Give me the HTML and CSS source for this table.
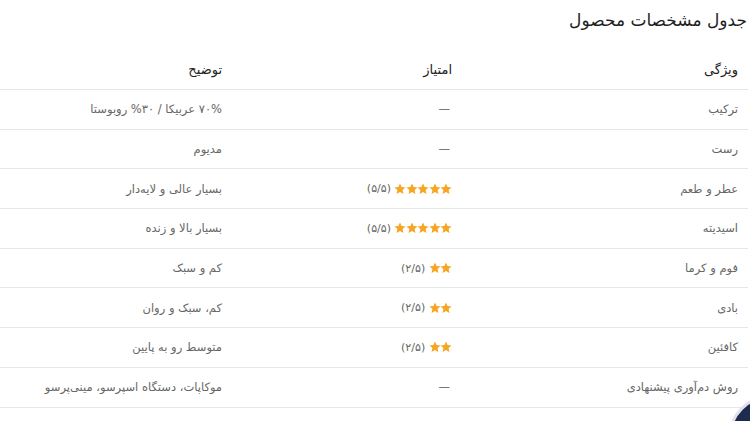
FILE: index.html
```html
<!DOCTYPE html>
<html lang="fa" dir="rtl">
<head>
<meta charset="utf-8">
<link rel="stylesheet" href="styles.css">
</head>
<body>
<svg width="0" height="0" class="defs" aria-hidden="true">
  <defs>
    <symbol id="st" viewBox="0 0 24 24"><polygon points="12,1 15.2,8.1 23,9 17.2,14.2 18.8,22 12,18 5.2,22 6.8,14.2 1,9 8.8,8.1"/></symbol>
  </defs>
</svg>
<div class="page">
  <h2 class="title">جدول مشخصات محصول</h2>
  <table class="spec">
    <colgroup>
      <col class="c1"><col class="c2"><col class="c3">
    </colgroup>
    <thead>
      <tr><th>ویژگی</th><th>امتیاز</th><th>توضیح</th></tr>
    </thead>
    <tbody>
      <tr><td>ترکیب</td><td><span class="dash">—</span></td><td>۷۰% عربیکا / ۳۰% روبوستا</td></tr>
      <tr><td>رست</td><td><span class="dash">—</span></td><td>مدیوم</td></tr>
      <tr><td>عطر و طعم</td><td><div class="rate"><span class="stars"><svg><use href="#st"/></svg><svg><use href="#st"/></svg><svg><use href="#st"/></svg><svg><use href="#st"/></svg><svg><use href="#st"/></svg></span><span class="score">(۵/۵)</span></div></td><td>بسیار عالی و لایه‌دار</td></tr>
      <tr><td>اسیدیته</td><td><div class="rate"><span class="stars"><svg><use href="#st"/></svg><svg><use href="#st"/></svg><svg><use href="#st"/></svg><svg><use href="#st"/></svg><svg><use href="#st"/></svg></span><span class="score">(۵/۵)</span></div></td><td>بسیار بالا و زنده</td></tr>
      <tr><td>فوم و کرما</td><td><div class="rate"><span class="stars"><svg><use href="#st"/></svg><svg><use href="#st"/></svg></span><span class="score">(۲/۵)</span></div></td><td>کم و سبک</td></tr>
      <tr><td>بادی</td><td><div class="rate"><span class="stars"><svg><use href="#st"/></svg><svg><use href="#st"/></svg></span><span class="score">(۲/۵)</span></div></td><td>کم، سبک و روان</td></tr>
      <tr><td>کافئین</td><td><div class="rate"><span class="stars"><svg><use href="#st"/></svg><svg><use href="#st"/></svg></span><span class="score">(۲/۵)</span></div></td><td>متوسط رو به پایین</td></tr>
      <tr><td>روش دم‌آوری پیشنهادی</td><td><span class="dash">—</span></td><td>موکاپات، دستگاه اسپرسو، مینی‌پرسو</td></tr>
    </tbody>
  </table>
</div>
<div class="fab"></div>
</body>
</html>
```
FILE: styles.css
```css
html, body {
  margin: 0;
  padding: 0;
  background: #ffffff;
  overflow: hidden;
}
body {
  font-family: "DejaVu Sans", "Noto Sans", sans-serif;
  color: #222;
}
.defs {
  position: absolute;
  width: 0;
  height: 0;
}
.page {
  margin-right: 2px;
}
.title {
  margin: 0;
  height: 50px;
  padding-right: 1px;
  font-size: 17px;
  font-weight: normal;
  line-height: 40px;
  color: #1e1e1e;
}
.spec {
  width: 770px;
  border-collapse: collapse;
  table-layout: fixed;
}
.c1 { width: 286px; }
.c2 { width: 230px; }
.c3 { width: 254px; }
.spec th {
  text-align: right;
  font-weight: normal;
  font-size: 13px;
  color: #222;
  height: 39px;
  padding: 0 10px 0 0;
  border-bottom: 1px solid #e6e6e6;
}
.spec td {
  text-align: right;
  font-size: 11.5px;
  color: #666;
  height: 38.7px;
  padding: 0 10px 0 0;
  border-bottom: 1px solid #e6e6e6;
  white-space: nowrap;
}
.dash {
  color: #777;
  padding-right: 2px;
}
.rate {
  display: flex;
  align-items: center;
  gap: 4px;
}
.stars {
  display: flex;
  fill: #f6a623;
}
.stars svg {
  width: 12px;
  height: 12px;
  margin-left: -0.6px;
}
.score {
  color: #666;
  font-size: 11px;
}
.fab {
  position: fixed;
  left: 728px;
  top: 395px;
  width: 80px;
  height: 80px;
  border-radius: 50%;
  background: #1d2b4f;
  border: 3px solid #dfe2ea;
}
```
